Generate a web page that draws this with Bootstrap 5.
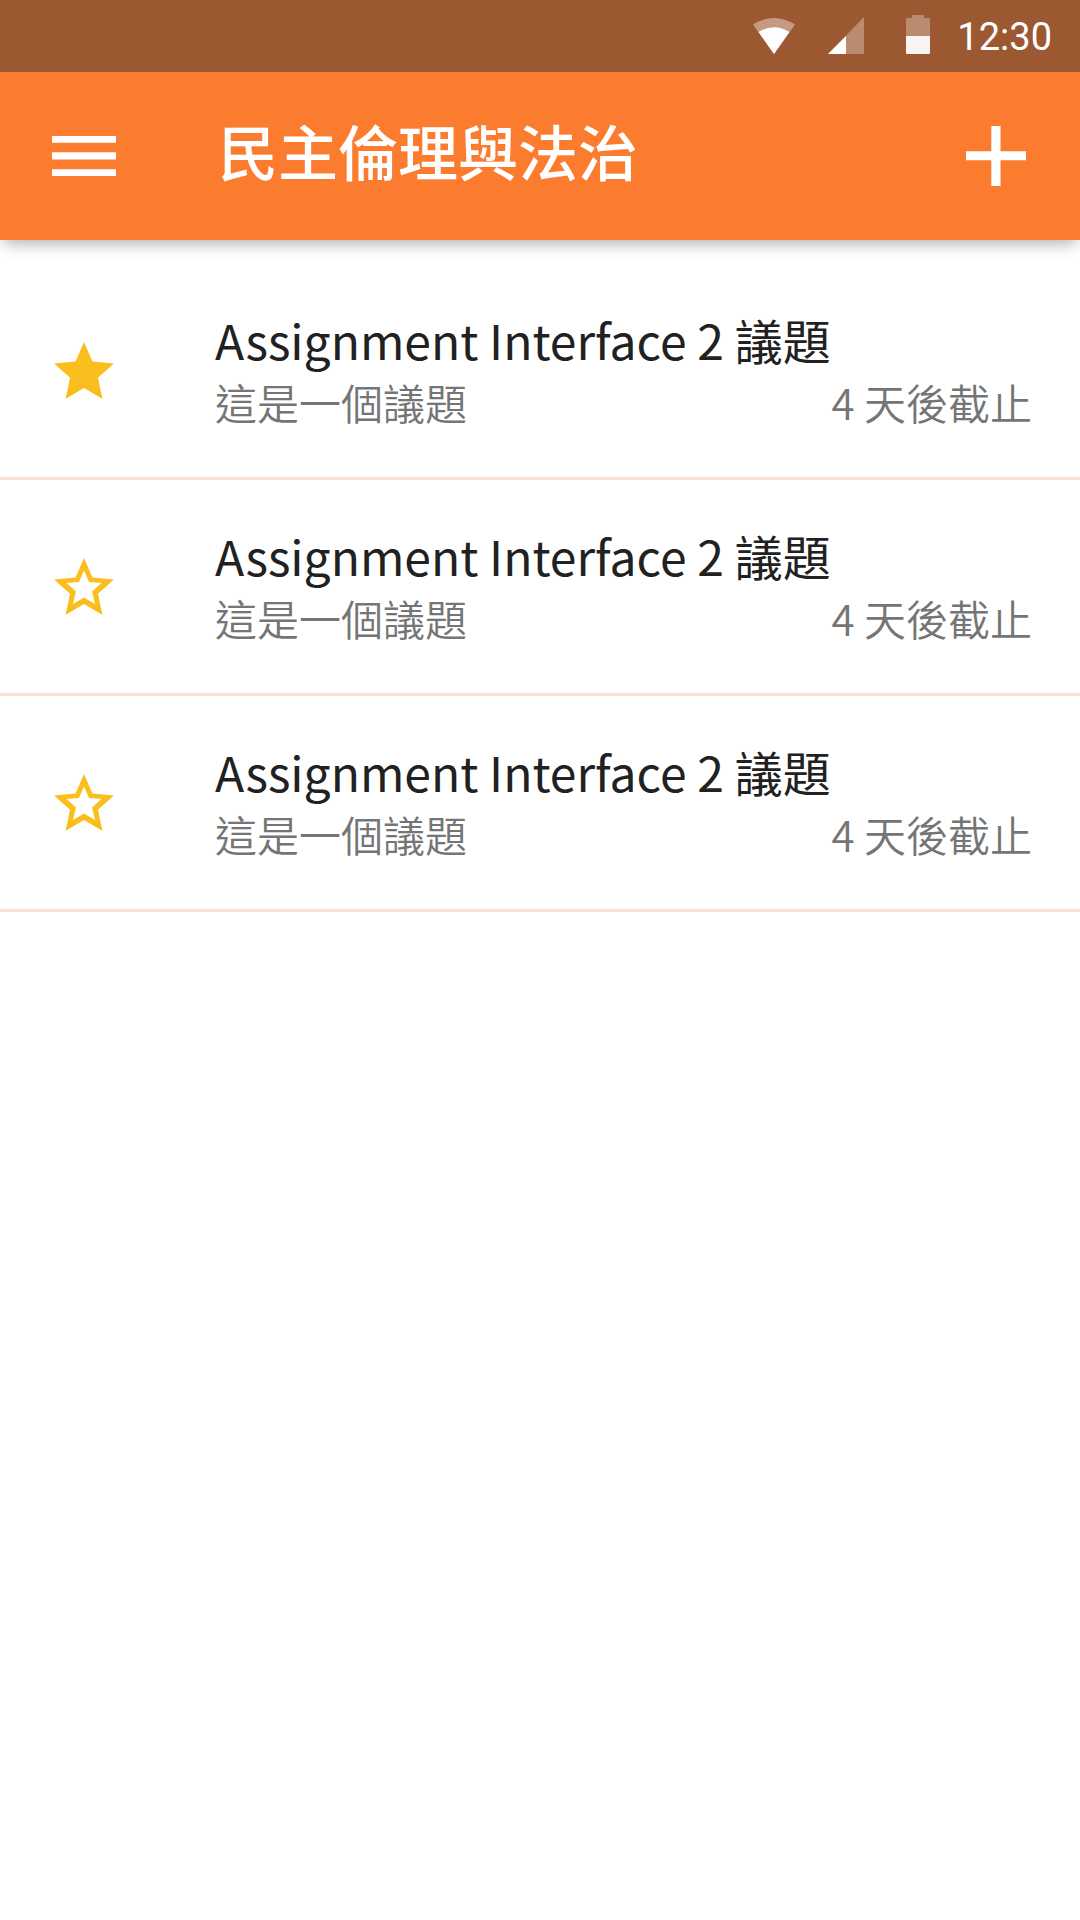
<!DOCTYPE html>
<html lang="zh-Hant">
<head>
<meta charset="utf-8">
<meta name="viewport" content="width=device-width, initial-scale=1">
<title>民主倫理與法治</title>
<link href="https://cdn.jsdelivr.net/npm/bootstrap@5.3.0/dist/css/bootstrap.min.css" rel="stylesheet">
<style>
  body { font-family: "Noto Sans CJK TC", sans-serif; background: #fff; }
  svg { display: block; flex: none; }
  .status-bar { background: #9c5931; height: 72px; padding: 15px 28px 0 0; }
  .status-time { font: 38px/44px Roboto, sans-serif; }
  .status-icons { gap: 32px; margin-right: 27px; }
  .app-bar { background: #fb7c2e; height: 168px; padding: 0 48px; box-shadow: 0 8px 14px -4px rgba(0, 0, 0, .3); }
  .app-title { font-size: 60px; line-height: 84px; font-weight: 500; margin-left: 98px; padding-bottom: 12px; }
  .icon-btn { width: 72px; height: 72px; }
  .topic-list { padding-top: 24px; border-radius: 0; }
  .topic-list .topic { padding: 45px 48px 42px; border-width: 0 0 3px; border-color: #fddfd0; border-radius: 0; background: #fff; }
  .topic-text { margin-left: 95px; color: #757575; font-size: 42px; line-height: 66px; font-weight: 350; }
  .topic-name { font-size: 48px; line-height: 60px; font-weight: 400; color: #212121; text-decoration: none; }
</style>
<script src="https://cdn.jsdelivr.net/npm/bootstrap@5.3.0/dist/js/bootstrap.bundle.min.js" defer></script>
</head>
<body>
<div class="status-bar d-flex align-items-start justify-content-end text-white">
  <div class="status-icons d-flex" aria-hidden="true">
    <svg width="44" height="40" viewBox="0 0 44 40"><path fill="#fff" fill-opacity=".4" d="M1 9.500Q22-3.500 43 9.500L22 39Z"/><path fill="#fff" d="M6.500 17Q22 7.500 37.500 17L22 39Z"/></svg>
    <svg width="38" height="40" viewBox="0 0 38 40"><path fill="#fff" fill-opacity=".3" d="M36 2V39H0Z"/><path fill="#fff" d="M18 21V39H0Z"/></svg>
    <svg class="ms-2" width="24" height="40" viewBox="0 0 24 40"><path fill="#fff" fill-opacity=".3" d="M6 0H18V3H23Q24 3 24 4V21H0V4Q0 3 1 3H6Z"/><path fill="#f9f5f2" d="M0 21H24V38Q24 39 23 39H1Q0 39 0 38Z"/></svg>
  </div>
  <span class="status-time">12:30</span>
</div>
<header class="app-bar d-flex align-items-center text-white position-relative z-1">
  <button type="button" class="icon-btn btn p-0 border-0 text-white" aria-label="選單">
    <svg width="72" height="72" viewBox="0 0 72 72" fill="currentColor"><path d="M4 16H68V22.700H4ZM4 32.300H68V39.500H4ZM4 49.300H68V56H4Z"/></svg>
  </button>
  <h1 class="app-title mb-0">民主倫理與法治</h1>
  <button type="button" class="icon-btn btn p-0 border-0 text-white ms-auto" aria-label="新增">
    <svg width="72" height="72" viewBox="0 0 72 72" fill="currentColor"><path d="M31.300 6H40.500V31.300H66V40.300H40.500V66H31.300V40.300H6V31.300H31.300Z"/></svg>
  </button>
</header>
<main>
  <ul class="topic-list list-group">
    <li class="topic list-group-item d-flex align-items-center">
      <button type="button" class="icon-btn btn p-0 border-0" aria-label="取消星號"><svg width="72" height="72" viewBox="0 0 72 72"><path fill="#fabf1e" d="M36 6 44.500 25.500 66 27.500 50 41.700 54.500 63 36 52 17.500 63 22 41.700 6 27.500 27.500 25.500Z"/></svg></button>
      <div class="topic-text flex-grow-1">
        <a href="#" class="topic-name d-block">Assignment Interface 2 議題</a>
        <div class="d-flex justify-content-between"><span>這是一個議題</span><span>4 天後截止</span></div>
      </div>
    </li>
    <li class="topic list-group-item d-flex align-items-center">
      <button type="button" class="icon-btn btn p-0 border-0" aria-label="加上星號"><svg width="72" height="72" viewBox="0 0 72 72"><path fill="#fabf1e" fill-rule="evenodd" d="M36 6 44.500 25.500 66 27.500 50 41.700 54.500 63 36 52 17.500 63 22 41.700 6 27.500 27.500 25.500ZM36 18.500 31 30 18.500 31 28 39.500 25 52 36 45.500 47 52 44 39.500 53.500 31 41 30Z"/></svg></button>
      <div class="topic-text flex-grow-1">
        <a href="#" class="topic-name d-block">Assignment Interface 2 議題</a>
        <div class="d-flex justify-content-between"><span>這是一個議題</span><span>4 天後截止</span></div>
      </div>
    </li>
    <li class="topic list-group-item d-flex align-items-center">
      <button type="button" class="icon-btn btn p-0 border-0" aria-label="加上星號"><svg width="72" height="72" viewBox="0 0 72 72"><path fill="#fabf1e" fill-rule="evenodd" d="M36 6 44.500 25.500 66 27.500 50 41.700 54.500 63 36 52 17.500 63 22 41.700 6 27.500 27.500 25.500ZM36 18.500 31 30 18.500 31 28 39.500 25 52 36 45.500 47 52 44 39.500 53.500 31 41 30Z"/></svg></button>
      <div class="topic-text flex-grow-1">
        <a href="#" class="topic-name d-block">Assignment Interface 2 議題</a>
        <div class="d-flex justify-content-between"><span>這是一個議題</span><span>4 天後截止</span></div>
      </div>
    </li>
  </ul>
</main>
</body>
</html>
